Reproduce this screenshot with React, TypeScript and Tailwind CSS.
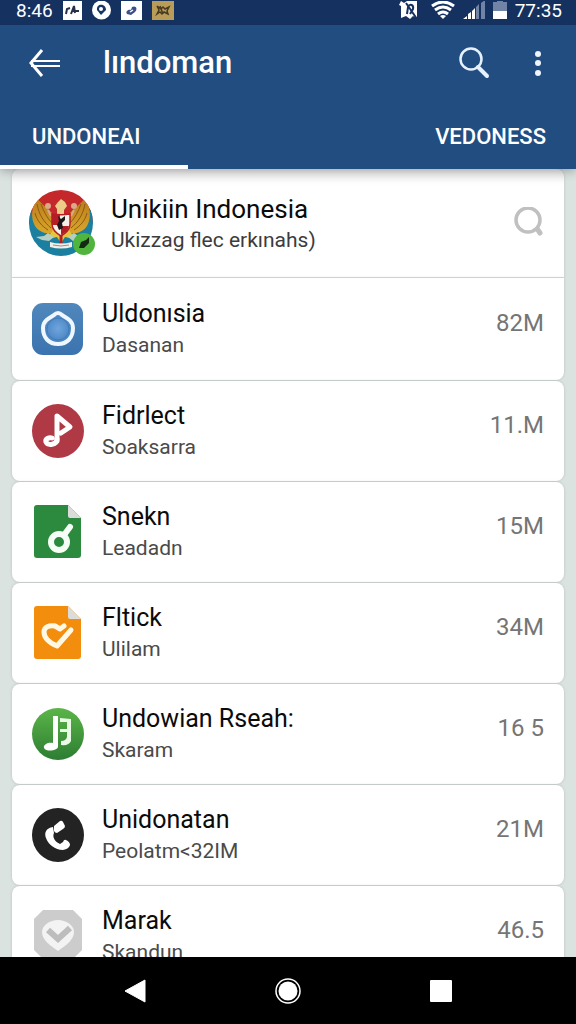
import React from "react";

type Item = {
  name: string;
  detail: string;
  size: string;
  icon: React.ReactNode;
};

function Emblem() {
  return (
    <svg viewBox="0 0 66 68" className="h-[68px] w-[66px]" aria-hidden="true">
      <defs>
        <clipPath id="round">
          <ellipse cx="32" cy="34" rx="32" ry="33" />
        </clipPath>
        <linearGradient id="wing" x1="0" y1="0" x2="0" y2="1">
          <stop offset="0" stopColor="#b97a1c" />
          <stop offset="1" stopColor="#d9a72b" />
        </linearGradient>
      </defs>
      <g clipPath="url(#round)">
        <path d="M0 0h64v34H0z" fill="#c4282b" />
        <path d="M0 22c10 4 18 8 32 8s24-6 32-10v48H0z" fill="#1b7f9f" />
        <path
          d="M8 9c5 7 11 10 15 15l3 20c-8 2-16-1-20-7C1 28 3 17 8 9zM56 9c-5 7-11 10-15 15l-3 20c8 2 16-1 20-7 5-9 3-20-2-28z"
          fill="url(#wing)"
        />
        <path
          d="M8 15c2 11 7 18 14 24M6 24c2 8 7 13 13 17M12 15c3 8 6 14 11 19M56 15c-2 11-7 18-14 24M58 24c-2 8-7 13-13 17M52 15c-3 8-6 14-11 19"
          fill="none"
          stroke="#8d5a12"
          strokeWidth="1"
        />
        <path d="M26 38l-8 12 10-2 4 6 4-6 10 2-8-12z" fill="#e5c63c" />
        <path d="M7 48l8-1 4-3 6 4-5 4-7-1zM57 48l-8-1-4-3-6 4 5 4 7-1z" fill="#b7cfc2" />
        <path d="M29 13l3-3 4 3 2 4-3 4v4h-7v-5l-2-3z" fill="#eccb8a" />
        <circle cx="19" cy="17" r="3" fill="#d9a98a" />
        <circle cx="45" cy="17" r="3" fill="#d9a98a" />
        <path d="M19 21l3 6M45 21l-3 6" stroke="#d9a98a" strokeWidth="2" />
        <path
          d="M23 25c6 1 12 1 18 0v10c0 6-4 9-9 12-5-3-9-6-9-12z"
          fill="#f4f0e8"
          stroke="#b51e26"
          strokeWidth="1.5"
        />
        <path d="M23 26h8v10h-8zM32 37h8c-1 5-4 7-8 9z" fill="#b51e26" />
        <path d="M29 27l3 3 4-3v4l-3 3 1 5-4 2-2-5 2-4z" fill="#1c1718" />
        <path d="M21 53q11 3 22 0v5q-11 3-22 0z" fill="#f1efe8" />
        <path d="M24 56q8 2 16 0" fill="none" stroke="#9b8d88" strokeWidth="1" />
        <path d="M32 46v8" stroke="#b51e26" strokeWidth="3" />
      </g>
      <circle cx="55" cy="55" r="11" fill="#50b53c" />
      <path d="M50 59l2-6 5-2 3-3v6l-5 5z" fill="#132b12" />
    </svg>
  );
}

function RingIcon() {
  return (
    <svg viewBox="0 0 52 54" className="h-[54px] w-[52px]" aria-hidden="true">
      <defs>
        <linearGradient id="blue" x1="0" y1="0" x2="0" y2="1">
          <stop offset="0" stopColor="#5088bd" />
          <stop offset="1" stopColor="#3a73ae" />
        </linearGradient>
        <radialGradient id="drop">
          <stop offset="0" stopColor="#6fa5de" />
          <stop offset="1" stopColor="#4480be" />
        </radialGradient>
      </defs>
      <rect y="1" width="51" height="52" rx="11" fill="url(#blue)" />
      <path
        d="M26 11q2 0 4 2c5 3 11 6 11 13 0 10-6 16-15 16s-15-6-15-16c0-7 6-10 11-13q2-2 4-2z"
        fill="url(#drop)"
        stroke="#eef7ff"
        strokeWidth="4"
      />
      <circle cx="26" cy="27" r="11" fill="none" stroke="#3f79b9" strokeWidth="1" />
    </svg>
  );
}

function NoteIcon() {
  return (
    <svg viewBox="0 0 52 54" className="h-[54px] w-[52px]" aria-hidden="true">
      <ellipse cx="26" cy="27" rx="26" ry="27" fill="#af3945" />
      <path
        d="M25 37V12l13 11-9 6"
        fill="none"
        stroke="#fff"
        strokeWidth="5"
        strokeLinejoin="round"
        strokeLinecap="round"
      />
      <path
        d="M25 35c0 6-9 7-11 3-1-3 3-5 6-4"
        fill="none"
        stroke="#fff"
        strokeWidth="5"
        strokeLinecap="round"
      />
    </svg>
  );
}

function FileIcon({ color, children }: { color: string; children: React.ReactNode }) {
  return (
    <svg viewBox="0 0 52 54" className="h-[54px] w-[52px]" aria-hidden="true">
      <path
        d="M5 0h31l13 13v37q0 3-3 3H5q-3 0-3-3V3q0-3 3-3z"
        fill={color}
      />
      <path d="M36 0l13 13H38q-2 0-2-2z" fill="#dcdcda" />
      {children}
    </svg>
  );
}

function KeyMark() {
  return (
    <>
      <circle cx="27" cy="37" r="8" fill="none" stroke="#f5fff5" strokeWidth="6" />
      <path d="M32 30l6-8" stroke="#f5fff5" strokeWidth="6" strokeLinecap="round" />
    </>
  );
}

function CheckMark() {
  return (
    <path
      d="M23 20c-6-1-11 1-11 6 0 6 6 11 13 14l14-16M23 20l5 3 4-3"
      fill="none"
      stroke="#fff8e2"
      strokeWidth="5"
      strokeLinecap="round"
      strokeLinejoin="round"
    />
  );
}

function SongIcon() {
  return (
    <svg viewBox="0 0 52 54" className="h-[54px] w-[52px]" aria-hidden="true">
      <defs>
        <linearGradient id="leaf" x1="0" y1="0" x2="0" y2="1">
          <stop offset="0" stopColor="#5bb548" />
          <stop offset="1" stopColor="#2d7d33" />
        </linearGradient>
      </defs>
      <circle cx="26" cy="27" r="26" fill="url(#leaf)" />
      <path d="M21 9h5v31c-1 4-12 5-14 1-1-4 5-6 9-5z" fill="#fff" />
      <path
        d="M28 11l11 1v22q-2 5-10 4v-4q5 0 6-4v-5h-7v-3h7v-7h-7z"
        fill="#eaf8e6"
      />
    </svg>
  );
}

function PhoneIcon() {
  return (
    <svg viewBox="0 0 52 54" className="h-[54px] w-[52px]" aria-hidden="true">
      <ellipse cx="26" cy="27" rx="26" ry="27" fill="#232323" />
      <path d="M22 18l6-5q2-1 3 1l2 4q0 2-2 3l-6 4q-2 0-3-2z" fill="#fff" />
      <path
        d="M21 19c-7 1-9 6-7 11 2 6 9 12 17 12q6-1 7-5 0-3-4-5-2-1-3 2l-3 2c-5-2-8-7-6-11z"
        fill="#fff"
      />
    </svg>
  );
}

function BadgeIcon() {
  return (
    <svg viewBox="0 0 52 54" className="h-[54px] w-[52px]" aria-hidden="true">
      <path d="M11 1h30l9 9v31l-9 9H11l-9-9V10z" fill="#cccccc" />
      <path
        d="M26 11c8 0 16 5 16 12 0 8-9 14-16 19-7-5-16-11-16-19 0-7 8-12 16-12z"
        fill="#f3f3f3"
      />
      <path d="M16 21l10 9 12-11" fill="none" stroke="#bdbdbd" strokeWidth="6" />
    </svg>
  );
}

const items: Item[] = [
  { name: "Uldonısia", detail: "Dasanan", size: "82M", icon: <RingIcon /> },
  { name: "Fidrlect", detail: "Soaksarra", size: "11.M", icon: <NoteIcon /> },
  {
    name: "Snekn",
    detail: "Leadadn",
    size: "15M",
    icon: (
      <FileIcon color="#2c8a3f">
        <KeyMark />
      </FileIcon>
    ),
  },
  {
    name: "Fltick",
    detail: "Ulilam",
    size: "34M",
    icon: (
      <FileIcon color="#f38d0d">
        <CheckMark />
      </FileIcon>
    ),
  },
  { name: "Undowian Rseah:", detail: "Skaram", size: "16 5", icon: <SongIcon /> },
  { name: "Unidonatan", detail: "Peolatm<32IM", size: "21M", icon: <PhoneIcon /> },
  { name: "Marak", detail: "Skandun", size: "46.5", icon: <BadgeIcon /> },
];

function StatusBar() {
  return (
    <div className="flex h-[25px] items-center justify-between bg-[#15315f] pr-[14px] pb-1 pl-4 text-[19px] leading-[20px] text-white">
      <div className="flex items-center gap-[10px]">
        <span>8:46</span>
        <svg viewBox="0 0 19 19" className="h-[19px] w-[19px]" aria-hidden="true">
          <path d="M0 0h19v19H0z" fill="#fff" />
          <path d="M3 13l1-5 3-1M8 13l3-8 1 7M10 10h6" fill="none" stroke="#26304a" strokeWidth="2" />
        </svg>
        <svg viewBox="0 0 19 19" className="h-[19px] w-[19px]" aria-hidden="true">
          <circle cx="9.5" cy="9" r="9.5" fill="#fff" />
          <path d="M9 14L5 9c-1-7 9-7 9 0z" fill="#173463" />
          <circle cx="9" cy="8" r="2" fill="#fff" />
        </svg>
        <svg viewBox="0 0 21 19" className="h-[19px] w-[21px]" aria-hidden="true">
          <path d="M0 0h21v19H0z" fill="#fff" />
          <path d="M6 13c-2-3 2-5 4-4l1-3c4-2 6 2 3 5l-4 3z" fill="#3c4f86" />
          <path d="M9 11l3-2" stroke="#fff" strokeWidth="1.5" />
        </svg>
        <svg viewBox="0 0 22 19" className="h-[19px] w-[22px]" aria-hidden="true">
          <path d="M0 0h22v19H0z" fill="#b99c58" />
          <path
            d="M5 5l4 3 2-2 2 2 4-2-2 4 1 3-4-2-2 2-2-2-3 2 2-4zM8 5l3 8"
            fill="none"
            stroke="#463b22"
            strokeWidth="1.5"
          />
        </svg>
      </div>
      <div className="flex items-center gap-2">
        <svg viewBox="0 0 20 19" className="mr-1 h-[19px] w-[20px]" aria-hidden="true">
          <path d="M2 0l3 2 3-2h10v17l-4-2-3 3-4-3-5 2V5L0 4z" fill="#fff" />
          <path d="M8 13l1-7c2-4 6-2 5 2l-3 5M7 2l11 16" fill="none" stroke="#15315f" strokeWidth="2" />
        </svg>
        <svg viewBox="0 0 24 19" className="h-[19px] w-[24px]" aria-hidden="true">
          <path
            d="M1 5q11-8 22 0M4 9q8-6 16 0M7 13q5-4 10 0"
            fill="none"
            stroke="#fff"
            strokeWidth="3"
          />
          <path d="M9 15l3 3 3-3q-3-2-6 0z" fill="#fff" />
        </svg>
        <svg viewBox="0 0 22 19" className="h-[19px] w-[22px]" aria-hidden="true">
          <path d="M0 18l4-3v3zM5 13l3-2v7H5zM9 10l3-3v11H9z" fill="#fff" />
          <path d="M13 6l3-3v15h-3zM18 2l4-3v19h-4z" fill="#7184a6" />
        </svg>
        <svg viewBox="0 0 14 19" className="h-[19px] w-[14px]" aria-hidden="true">
          <path d="M0 1h4V0h6v1h4v9H0z" fill="#7184a6" />
          <path d="M0 10h14v8H0z" fill="#fff" />
        </svg>
        <span>77:35</span>
      </div>
    </div>
  );
}

function Header() {
  return (
    <header className="relative z-10 bg-[#224d80] text-white shadow-[0_2px_10px_rgba(0,0,0,0.3)]">
      <StatusBar />
      <div className="flex h-[76px] items-center pr-[22px] pl-7">
        <button type="button" aria-label="Back">
          <svg viewBox="0 0 34 28" className="h-[28px] w-[34px]" aria-hidden="true">
            <path d="M14 1L3 14l11 13" fill="none" stroke="#fff" strokeWidth="3" />
            <path d="M3 12h29M3 17h29" stroke="#fff" strokeWidth="2" />
          </svg>
        </button>
        <h1 className="ml-[41px] flex-1 text-[31px] leading-[36px] font-medium">lındoman</h1>
        <button type="button" aria-label="Search">
          <svg viewBox="0 0 32 32" className="h-[32px] w-[32px]" aria-hidden="true">
            <circle cx="13" cy="12" r="10.5" fill="none" stroke="#e6f1fc" strokeWidth="2.5" />
            <path d="M20 20l9 9" stroke="#e6f1fc" strokeWidth="4" strokeLinecap="round" />
          </svg>
        </button>
        <button type="button" aria-label="More options" className="ml-8">
          <svg viewBox="0 0 32 32" className="h-[32px] w-[32px]" aria-hidden="true">
            <circle cx="16" cy="7" r="3" fill="#eef5fd" />
            <circle cx="16" cy="16" r="3" fill="#eef5fd" />
            <circle cx="16" cy="26" r="3" fill="#eef5fd" />
          </svg>
        </button>
      </div>
      <div
        role="tablist"
        className="flex h-[68px] justify-between text-[22px] leading-[28px] font-medium"
      >
        <button
          type="button"
          role="tab"
          aria-selected="true"
          className="w-[188px] border-b-4 border-white pt-2 pl-8 text-left"
        >
          UNDONEAI
        </button>
        <button
          type="button"
          role="tab"
          aria-selected="false"
          className="border-b-4 border-transparent pt-2 pr-[30px]"
        >
          VEDONESS
        </button>
      </div>
    </header>
  );
}

function NavBar() {
  return (
    <nav className="grid h-[67px] shrink-0 grid-cols-3 place-items-center bg-black px-[59px]">
      <button type="button" aria-label="Back">
        <svg viewBox="0 0 22 26" className="h-[26px] w-[22px]" aria-hidden="true">
          <path d="M21 2v22L1 13z" fill="#fff" stroke="#fff" strokeLinejoin="round" />
        </svg>
      </button>
      <button type="button" aria-label="Home">
        <svg viewBox="0 0 28 28" className="h-[28px] w-[28px]" aria-hidden="true">
          <circle cx="14" cy="14" r="12" fill="none" stroke="#fff" strokeWidth="1.5" />
          <circle cx="14" cy="14" r="9.5" fill="#fff" />
        </svg>
      </button>
      <button type="button" aria-label="Recent apps">
        <svg viewBox="0 0 22 22" className="h-[22px] w-[22px]" aria-hidden="true">
          <rect width="22" height="22" rx="1" fill="#fff" />
        </svg>
      </button>
    </nav>
  );
}

export default function App() {
  return (
    <div className="flex h-screen flex-col overflow-hidden bg-[#dbe3e1] font-[Roboto,sans-serif]">
      <Header />
      <main className="min-h-0 flex-1 overflow-hidden px-3">
        {/* Featured entry */}
        <section className="flex h-[109px] items-center rounded-t-lg border-b border-[#dcdcdc] bg-linear-to-b from-[#e9e9e9] to-white to-15% pr-5 pl-[17px] shadow-[0_0_3px_rgba(0,0,0,0.15)]">
          <Emblem />
          <div className="ml-4 flex-1 pt-[2px]">
            <h2 className="text-[26px] leading-[32px] text-[#0b0b0b]">Unikiin Indonesia</h2>
            <p className="text-[21px] leading-[30px] text-[#3c3c3c]">Ukizzag flec erkınahs)</p>
          </div>
          <button type="button" aria-label="Search entry">
            <svg viewBox="0 0 32 32" className="h-[32px] w-[32px]" aria-hidden="true">
              <circle cx="16" cy="13" r="12" fill="none" stroke="#c0c0c0" strokeWidth="3.5" />
              <path d="M26 23l2 3" stroke="#c0c0c0" strokeWidth="5" strokeLinecap="round" />
            </svg>
          </button>
        </section>

        {/* Remaining entries */}
        <ul className="flex flex-col gap-px">
          {items.map((item) => (
            <li
              key={item.name}
              className="flex h-[100px] items-center rounded-lg bg-white pr-5 pl-5 shadow-[0_0_3px_rgba(0,0,0,0.15)] first:h-[102px] first:rounded-t-none"
            >
              {item.icon}
              <div className="ml-[18px] flex-1">
                <h2 className="text-[25px] leading-[32px] text-[#0b0b0b]">{item.name}</h2>
                <p className="text-[21px] leading-[30px] text-[#4a4a4a]">{item.detail}</p>
              </div>
              <span className="pb-3 text-[24px] leading-[28px] text-[#757575]">{item.size}</span>
            </li>
          ))}
        </ul>
      </main>
      <NavBar />
    </div>
  );
}
